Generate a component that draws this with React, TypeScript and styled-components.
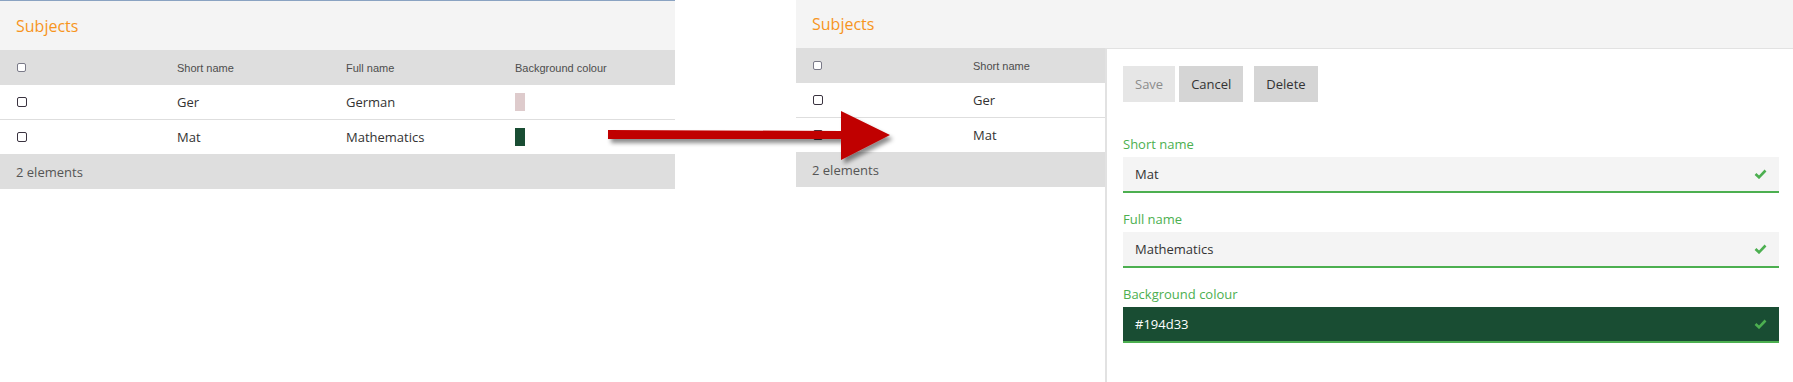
import React from "react";
import styled, { createGlobalStyle } from "styled-components";

const Global = createGlobalStyle`
  html, body { margin: 0; padding: 0; background: #ffffff; }
  body { font-family: "Open Sans", "Noto Sans", sans-serif; color: #333; }
  * { box-sizing: border-box; }
`;

const Page = styled.div`
  position: relative;
  display: flex;
  align-items: flex-start;
  width: 1793px;
  height: 382px;
  overflow: hidden;
`;

const LeftScreen = styled.section`
  width: 675px;
  border-top: 1px solid #8aa3c2;
`;

const RightScreen = styled.section`
  margin-left: 121px;
  flex: 1;
  height: 382px;
  display: flex;
  flex-direction: column;
`;

const TitleBar = styled.div<{ $h: number }>`
  height: ${(p) => p.$h}px;
  background: #f4f4f4;
  display: flex;
  align-items: center;
  padding-left: 16px;
  font-size: 16px;
  color: #f7941d;
  flex-shrink: 0;
`;

const Body = styled.div`
  flex: 1;
  display: flex;
  align-items: flex-start;
  background: #ffffff;
`;

const ListPanel = styled.div`
  width: 309px;
  background: #ffffff;
`;

const Row = styled.div<{ $cols: string; $kind: "head" | "body" }>`
  display: grid;
  grid-template-columns: ${(p) => p.$cols};
  align-items: center;
  height: 35px;
  background: ${(p) => (p.$kind === "body" ? "#ffffff" : "#dedede")};
  border-bottom: ${(p) => (p.$kind === "body" ? "1px solid #dedede" : "none")};
  &:nth-last-of-type(2) { border-bottom: none; height: 34px; }
`;

const Cell = styled.div<{ $head?: boolean }>`
  padding-left: 16px;
  font-family: ${(p) => (p.$head ? '"Liberation Sans", Arial, sans-serif' : '"Open Sans", sans-serif')};
  font-size: ${(p) => (p.$head ? 11 : 13)}px;
  color: ${(p) => (p.$head ? "#4d4d4d" : "#333")};
  white-space: nowrap;
  display: flex;
  align-items: center;
`;

const Footer = styled.div`
  height: 35px;
  background: #dedede;
  display: flex;
  align-items: center;
  padding-left: 16px;
  font-size: 13px;
  color: #555;
`;

const Check = styled.span<{ $head?: boolean }>`
  display: inline-block;
  width: ${(p) => (p.$head ? 9 : 10)}px;
  height: ${(p) => (p.$head ? 9 : 10)}px;
  border: 1px solid ${(p) => (p.$head ? "#7a7a88" : "#3a3340")};
  border-radius: 2px;
  background: #fff;
  margin-left: 1px;
`;

const Swatch = styled.span<{ $c: string }>`
  display: inline-block;
  width: 10px;
  height: 18px;
  background: ${(p) => p.$c};
`;

const Detail = styled.div`
  flex: 1;
  align-self: stretch;
  display: flex;
  flex-direction: column;
  background: #ffffff;
  border-left: 2px solid #e2e2e2;
  border-top: 1px solid #e2e2e2;
  padding: 17px 14px 0 16px;
`;

const Buttons = styled.div`
  display: flex;
  gap: 4px;
  margin-bottom: 16px;
`;

const Button = styled.button<{ $disabled?: boolean; $gapLeft?: number }>`
  height: 36px;
  padding: 0 12px;
  border: none;
  margin-left: ${(p) => p.$gapLeft ?? 0}px;
  background: ${(p) => (p.$disabled ? "#e6e6e6" : "#d5d5d5")};
  color: ${(p) => (p.$disabled ? "#8c8c8c" : "#333")};
  font-family: "Open Sans", sans-serif;
  font-size: 13px;
`;

const Field = styled.div`
  margin-top: 17px;
  display: flex;
  flex-direction: column;
  gap: 4px;
`;

const Label = styled.label`
  font-size: 13px;
  line-height: 18px;
  color: #4caf50;
`;

const Input = styled.div<{ $bg?: string; $fg?: string }>`
  height: 36px;
  background: ${(p) => p.$bg ?? "#f4f4f4"};
  color: ${(p) => p.$fg ?? "#333"};
  border-bottom: 2px solid #4caf50;
  display: flex;
  align-items: center;
  justify-content: space-between;
  padding: 0 12px;
  font-size: 13px;
`;

const ArrowSvg = styled.svg`
  position: absolute;
  left: 600px;
  top: 100px;
`;

const CheckMark = () => (
  <svg width="13" height="10" viewBox="0 0 13 10">
    <path d="M1.5 5 L5 8.3 L11.5 1.5" fill="none" stroke="#4caf50" strokeWidth="2.6" strokeLinejoin="miter" />
  </svg>
);

const rows = [
  { s: "Ger", f: "German", c: "#decbcc" },
  { s: "Mat", f: "Mathematics", c: "#194d33" },
];

const FULL_COLS = "161px 169px 169px 1fr";
const SHORT_COLS = "161px 1fr";

export default function App() {
  return (
    <>
      <Global />
      <Page>
        <LeftScreen>
          <TitleBar $h={49}>Subjects</TitleBar>
          <Row $cols={FULL_COLS} $kind="head">
            <Cell $head><Check $head /></Cell>
            <Cell $head>Short name</Cell>
            <Cell $head>Full name</Cell>
            <Cell $head>Background colour</Cell>
          </Row>
          {rows.map((r) => (
            <Row key={r.s} $cols={FULL_COLS} $kind="body">
              <Cell><Check /></Cell>
              <Cell>{r.s}</Cell>
              <Cell>{r.f}</Cell>
              <Cell><Swatch $c={r.c} /></Cell>
            </Row>
          ))}
          <Footer>2 elements</Footer>
        </LeftScreen>

        <RightScreen>
          <TitleBar $h={48}>Subjects</TitleBar>
          <Body>
            <ListPanel>
              <Row $cols={SHORT_COLS} $kind="head">
                <Cell $head><Check $head /></Cell>
                <Cell $head>Short name</Cell>
              </Row>
              {rows.map((r) => (
                <Row key={r.s} $cols={SHORT_COLS} $kind="body">
                  <Cell><Check /></Cell>
                  <Cell>{r.s}</Cell>
                </Row>
              ))}
              <Footer>2 elements</Footer>
            </ListPanel>
            <Detail>
              <Buttons>
                <Button $disabled>Save</Button>
                <Button>Cancel</Button>
                <Button $gapLeft={7}>Delete</Button>
              </Buttons>
              <Field>
                <Label>Short name</Label>
                <Input>Mat<CheckMark /></Input>
              </Field>
              <Field>
                <Label>Full name</Label>
                <Input>Mathematics<CheckMark /></Input>
              </Field>
              <Field>
                <Label>Background colour</Label>
                <Input $bg="#194d33" $fg="#ffffff">#194d33<CheckMark /></Input>
              </Field>
            </Detail>
          </Body>
        </RightScreen>

        <ArrowSvg width="310" height="75" viewBox="0 0 310 75">
          <defs>
            <filter id="sh" x="-10%" y="-30%" width="130%" height="180%">
              <feDropShadow dx="3" dy="4" stdDeviation="2.2" floodColor="#000" floodOpacity="0.45" />
            </filter>
          </defs>
          <polygon
            points="8,30 241,31 241,11 290,35 241,60 241,39 8,39"
            fill="#c00000"
            filter="url(#sh)"
          />
        </ArrowSvg>
      </Page>
    </>
  );
}
